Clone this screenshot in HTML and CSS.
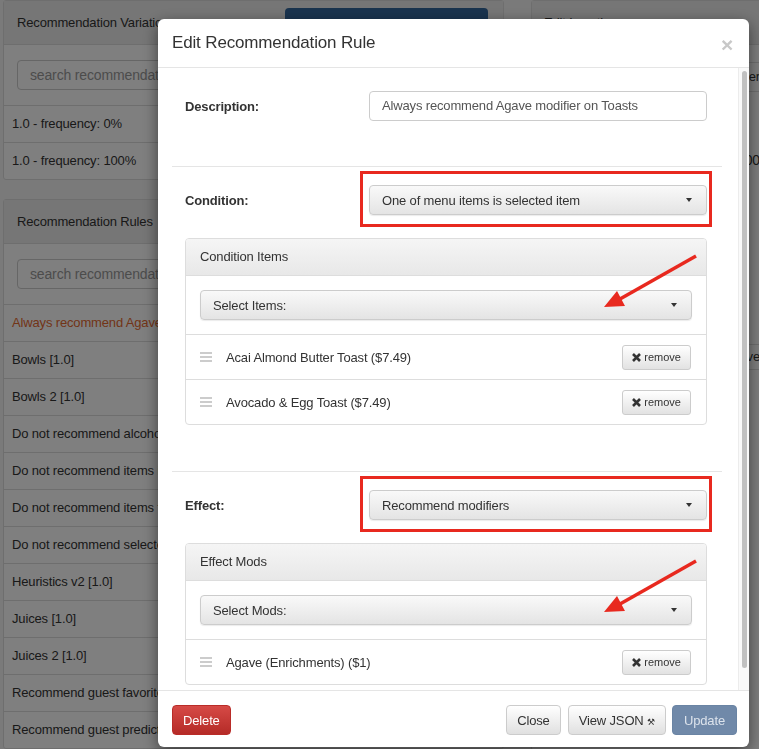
FILE: index.html
```html
<!DOCTYPE html>
<html lang="en">
<head>
    <meta charset="UTF-8">
    <title>Edit Recommendation Rule</title>
    <link rel="stylesheet" href="styles.css">
</head>
<body>
    <div class="page">
        <div class="col-main">
            <div class="bg-panel">
                <div class="bg-head">
                    <span>Recommendation Variations</span>
                    <span class="bg-btn"></span>
                </div>
                <div class="bg-search"><div class="bg-input">search recommendation variations</div></div>
                <div class="bg-item">1.0 - frequency: 0%</div>
                <div class="bg-item">1.0 - frequency: 100%</div>
            </div>
            <div class="bg-panel">
                <div class="bg-head"><span>Recommendation Rules</span></div>
                <div class="bg-search"><div class="bg-input">search recommendation rules</div></div>
                <div class="bg-item active">Always recommend Agave modifier on Toasts [1.0]</div>
                <div class="bg-item">Bowls [1.0]</div>
                <div class="bg-item">Bowls 2 [1.0]</div>
                <div class="bg-item">Do not recommend alcohol [1.0]</div>
                <div class="bg-item">Do not recommend items in cart [1.0]</div>
                <div class="bg-item">Do not recommend items from same category [1.0]</div>
                <div class="bg-item">Do not recommend selected item [1.0]</div>
                <div class="bg-item">Heuristics v2 [1.0]</div>
                <div class="bg-item">Juices [1.0]</div>
                <div class="bg-item">Juices 2 [1.0]</div>
                <div class="bg-item">Recommend guest favorites [1.0]</div>
                <div class="bg-item">Recommend guest predictions [1.0]</div>
            </div>
        </div>
        <div class="col-side">
            <div class="bg-panel side">
                <div class="bg-head"><span>Edit Location</span></div>
                <div class="side-tabs"><span>Order</span></div>
                <div class="side-line">$100</div>
                <div class="side-box"><span>Save</span></div>
            </div>
        </div>
    </div>

    <div class="backdrop"></div>

    <div class="modal">
        <div class="modal-header">
            <h4>Edit Recommendation Rule</h4>
            <span class="close">&times;</span>
        </div>
        <div class="modal-main">
            <div class="modal-body">
                <div class="field-row first">
                    <label>Description:</label>
                    <div class="text-input">Always recommend Agave modifier on Toasts</div>
                </div>
                <hr>
                <div class="field-row">
                    <label>Condition:</label>
                    <div class="select-btn highlight">One of menu items is selected item<span class="caret"></span></div>
                </div>
                <div class="panel">
                    <div class="panel-head">Condition Items</div>
                    <div class="panel-body">
                        <div class="select-btn">Select Items:<span class="caret"></span></div>
                    </div>
                    <div class="list-row">
                        <svg class="handle" width="12" height="10" viewBox="0 0 12 10"><rect y="0" width="12" height="2"/><rect y="4" width="12" height="2"/><rect y="8" width="12" height="2"/></svg>
                        <span>Acai Almond Butter Toast ($7.49)</span>
                        <button class="btn-xs"><svg width="9" height="9" viewBox="0 0 9 9"><path d="M1 1L8 8M8 1L1 8"/></svg>remove</button>
                    </div>
                    <div class="list-row">
                        <svg class="handle" width="12" height="10" viewBox="0 0 12 10"><rect y="0" width="12" height="2"/><rect y="4" width="12" height="2"/><rect y="8" width="12" height="2"/></svg>
                        <span>Avocado &amp; Egg Toast ($7.49)</span>
                        <button class="btn-xs"><svg width="9" height="9" viewBox="0 0 9 9"><path d="M1 1L8 8M8 1L1 8"/></svg>remove</button>
                    </div>
                    <svg class="arrow" width="120" height="80" viewBox="0 0 120 80">
                        <line x1="110" y1="17" x2="34" y2="60"/>
                        <polygon points="18,68 39,67 31,52"/>
                    </svg>
                </div>
                <hr>
                <div class="field-row">
                    <label>Effect:</label>
                    <div class="select-btn highlight">Recommend modifiers<span class="caret"></span></div>
                </div>
                <div class="panel">
                    <div class="panel-head">Effect Mods</div>
                    <div class="panel-body">
                        <div class="select-btn">Select Mods:<span class="caret"></span></div>
                    </div>
                    <div class="list-row">
                        <svg class="handle" width="12" height="10" viewBox="0 0 12 10"><rect y="0" width="12" height="2"/><rect y="4" width="12" height="2"/><rect y="8" width="12" height="2"/></svg>
                        <span>Agave (Enrichments) ($1)</span>
                        <button class="btn-xs"><svg width="9" height="9" viewBox="0 0 9 9"><path d="M1 1L8 8M8 1L1 8"/></svg>remove</button>
                    </div>
                    <svg class="arrow" width="120" height="80" viewBox="0 0 120 80">
                        <line x1="110" y1="17" x2="34" y2="60"/>
                        <polygon points="18,68 39,67 31,52"/>
                    </svg>
                </div>
            </div>
            <div class="scrollbar"><div class="thumb"></div></div>
        </div>
        <div class="modal-footer">
            <button class="btn btn-danger">Delete</button>
            <button class="btn btn-default push">Close</button>
            <button class="btn btn-default">View JSON <span class="tools">&#9874;</span></button>
            <button class="btn btn-primary">Update</button>
        </div>
    </div>
</body>
</html>
```

FILE: styles.css
```css
* {
    box-sizing: border-box;
}
html, body {
    margin: 0;
    height: 100%;
}
body {
    font-family: "Liberation Sans", Arial, sans-serif;
    font-size: 13px;
    letter-spacing: -0.15px;
    color: #333;
    background: #f4f4f4;
    overflow: hidden;
}

/* page behind the dialog */
.page {
    display: flex;
    padding-left: 3px;
    height: 749px;
}
.col-main {
    width: 501px;
    flex: none;
}
.col-side {
    width: 230px;
    flex: none;
    margin-left: 27px;
}
.bg-panel {
    background: #fff;
    border: 1px solid #ddd;
    border-radius: 3px;
    margin-bottom: 19px;
}
.bg-head {
    height: 44px;
    display: flex;
    align-items: center;
    justify-content: space-between;
    padding: 0 15px 0 13px;
    background: #ececec;
    border-bottom: 1px solid #ddd;
}
.bg-btn {
    width: 203px;
    height: 30px;
    background: #34679d;
    border-radius: 4px;
}
.bg-search {
    padding: 15px 13px;
}
.bg-input {
    height: 30px;
    border: 1px solid #ccc;
    border-radius: 4px;
    padding: 0 12px;
    line-height: 28px;
    color: #999;
    font-size: 14px;
    white-space: nowrap;
}
.bg-item {
    height: 37px;
    line-height: 36px;
    border-top: 1px solid #ddd;
    padding-left: 8px;
    white-space: nowrap;
}
.bg-item.active {
    color: #e56a30;
}
.side .bg-head {
    padding-left: 12px;
}
.side-tabs {
    margin: 17px 0 0 12px;
    height: 30px;
    border: 1px solid #ddd;
    border-right: none;
    text-align: right;
    line-height: 28px;
}
.side-line {
    margin-top: 60px;
    text-align: right;
    font-size: 14px;
}
.side-box {
    margin: 176px 0 380px 12px;
    height: 26px;
    border: 1px solid #ddd;
    border-right: none;
    text-align: right;
    line-height: 24px;
}

.backdrop {
    position: fixed;
    top: 0;
    left: 0;
    right: 0;
    bottom: 0;
    background: rgba(0, 0, 0, 0.5);
}

/* dialog */
.modal {
    position: fixed;
    left: 158px;
    top: 19px;
    width: 591px;
    background: #fff;
    border-radius: 6px;
    box-shadow: 0 5px 15px rgba(0, 0, 0, 0.5);
    overflow: hidden;
}
.modal-header {
    display: flex;
    align-items: center;
    justify-content: space-between;
    height: 49px;
    padding: 0 16px 0 14px;
    border-bottom: 1px solid #e5e5e5;
}
.modal-header h4 {
    margin: 0;
    font-size: 17px;
    line-height: 20px;
    font-weight: normal;
}
.close {
    font-size: 21px;
    font-weight: bold;
    color: #c8c8c8;
    line-height: 20px;
    padding-top: 4px;
}
.modal-main {
    display: flex;
    height: 622px;
}
.modal-body {
    flex: 1;
    min-width: 0;
    overflow: hidden;
    padding: 0 16px 30px 14px;
}
.scrollbar {
    width: 11px;
    flex: none;
    padding: 3px 2px 22px 3px;
    background: #fafafa;
    border-left: 1px solid #ececec;
}
.thumb {
    height: 100%;
    background: #c1c1c1;
    border-radius: 4px;
}
hr {
    border: 0;
    border-top: 1px solid #e5e5e5;
    margin: 46px 0 18px;
}
.field-row {
    display: grid;
    grid-template-columns: 184px 1fr;
    align-items: center;
    padding: 0 15px 0 13px;
}
.field-row.first {
    margin-top: 23px;
}
.field-row.first + hr {
    margin-top: 45px;
}
.field-row label {
    font-weight: bold;
}
.text-input {
    height: 30px;
    border: 1px solid #ccc;
    border-radius: 4px;
    padding: 0 12px;
    line-height: 28px;
    color: #555;
}
.select-btn {
    display: flex;
    align-items: center;
    height: 30px;
    padding: 0 12px;
    border: 1px solid #ccc;
    border-radius: 4px;
    background: linear-gradient(to bottom, #f9f9f9, #e4e4e4);
    box-shadow: 0 1px 1px rgba(0, 0, 0, 0.08);
}
.caret {
    margin-left: auto;
    margin-right: 2px;
    border-top: 4px solid #333;
    border-left: 3px solid transparent;
    border-right: 3px solid transparent;
}
.highlight {
    position: relative;
}
.highlight::after {
    content: "";
    position: absolute;
    top: -15px;
    bottom: -13px;
    left: -10px;
    right: -6px;
    border: 3px solid #e8291f;
}
.panel {
    position: relative;
    margin: 23px 15px 0 13px;
    border: 1px solid #ddd;
    border-radius: 4px;
}
.panel-head {
    height: 37px;
    line-height: 36px;
    padding: 0 14px;
    border-bottom: 1px solid #ddd;
    border-radius: 3px 3px 0 0;
    background: linear-gradient(to bottom, #f5f5f5, #e8e8e8);
}
.panel-body {
    padding: 14px;
}
.list-row {
    display: flex;
    align-items: center;
    height: 45px;
    border-top: 1px solid #ddd;
    padding: 0 15px 0 14px;
}
.handle {
    fill: #ccc;
    margin-right: 14px;
}
.btn-xs {
    margin-left: auto;
    display: flex;
    align-items: center;
    height: 25px;
    padding: 0 9px;
    font-family: "Liberation Sans", Arial, sans-serif;
    font-size: 11px;
    color: #333;
    border: 1px solid #ccc;
    border-radius: 3px;
    background: linear-gradient(to bottom, #fff, #e2e2e2);
}
.btn-xs svg {
    stroke: #333;
    stroke-width: 2.6;
    margin-right: 3px;
}
.arrow {
    position: absolute;
    left: 400px;
    top: 0;
}
.arrow line {
    stroke: #e8291f;
    stroke-width: 3.5;
}
.arrow polygon {
    fill: #e8291f;
}

.modal-footer {
    display: flex;
    gap: 6px;
    padding: 14px 12px 12px 14px;
    border-top: 1px solid #e5e5e5;
}
.btn {
    height: 30px;
    padding: 0 10px;
    font-family: "Liberation Sans", Arial, sans-serif;
    font-size: 13px;
    letter-spacing: -0.15px;
    border: 1px solid #ccc;
    border-radius: 4px;
}
.push {
    margin-left: auto;
    margin-right: 1px;
}
.btn-default {
    color: #333;
    background: linear-gradient(to bottom, #fff, #e0e0e0);
}
.btn-danger {
    color: #fff;
    border-color: #b92c28;
    background: linear-gradient(to bottom, #d64a46, #b52b27);
}
.btn-primary {
    padding: 0 11px;
    color: #dce3ec;
    border-color: #6a84a4;
    background: #7089a9;
}
.tools {
    font-family: "DejaVu Sans", sans-serif;
    font-size: 9px;
}
```
